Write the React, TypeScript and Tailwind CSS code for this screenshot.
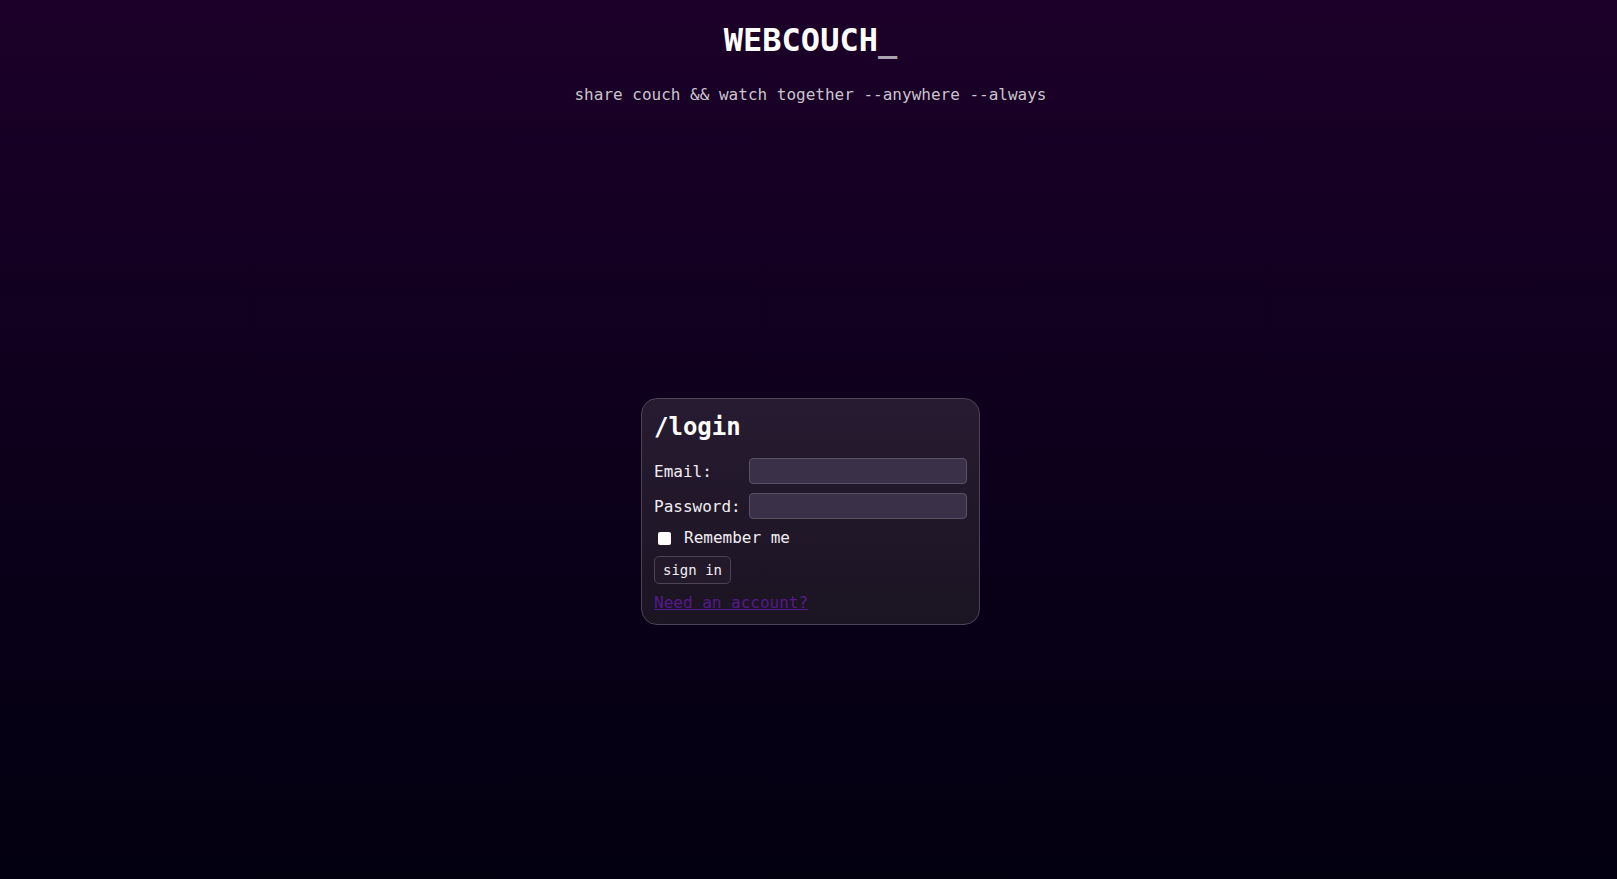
export default function App() {
  return (
    <div className="min-h-screen w-full bg-gradient-to-b from-[#1c0029] to-[#030010] pl-[4px] font-['DejaVu_Sans_Mono',monospace] text-[#f2eef4]">
      <header className="pt-[20px] text-center">
        <h1 className="text-[32px] font-bold leading-[40px] text-white">
          WEBCOUCH<span className="text-[#aaa2ac]">_</span>
        </h1>
        <p className="mt-[25px] text-[16px] leading-[20px] text-[#cbc4cc]">
          share couch &amp;&amp; watch together --anywhere --always
        </p>
      </header>

      <main className="flex justify-center pt-[293px]">
        <div className="w-[339px] h-[227px] rounded-[16px] border border-[#4d4356] bg-gradient-to-b from-[#271b31] to-[#1b1422] pl-[12px] pr-[12px] pt-[12px]">
          <h2 className="text-[24px] font-bold leading-[32px] text-white">/login</h2>

          <div className="mt-[15px] flex flex-col gap-[9px]">
            {["Email:", "Password:"].map((label) => (
              <div key={label} className="flex items-center">
                <span className="w-[95px] pt-[2px] text-[16px] leading-[20px]">{label}</span>
                <input
                  type={label === "Email:" ? "email" : "password"}
                  className="h-[26px] w-[218px] rounded-[4px] border border-[#5b5167] bg-[#3a3047] outline-none"
                />
              </div>
            ))}
          </div>

          <label className="mt-[9px] flex h-[20px] items-center text-[16px] leading-[20px]">
            <input type="checkbox" className="ml-[4px] mr-[13px] h-[13px] w-[13px] appearance-none rounded-[2px] bg-white" />
            Remember me
          </label>

          <button className="mt-[8px] block h-[28px] rounded-[5px] border border-[#4c4355] bg-[#221a2a] px-[8px] text-[14px] leading-[18px] text-[#f2eef4]">
            sign in
          </button>

          <a href="#" className="mt-[9px] block w-fit text-[16px] leading-[20px] text-[#551a8b] underline">
            Need an account?
          </a>
        </div>
      </main>
    </div>
  );
}
